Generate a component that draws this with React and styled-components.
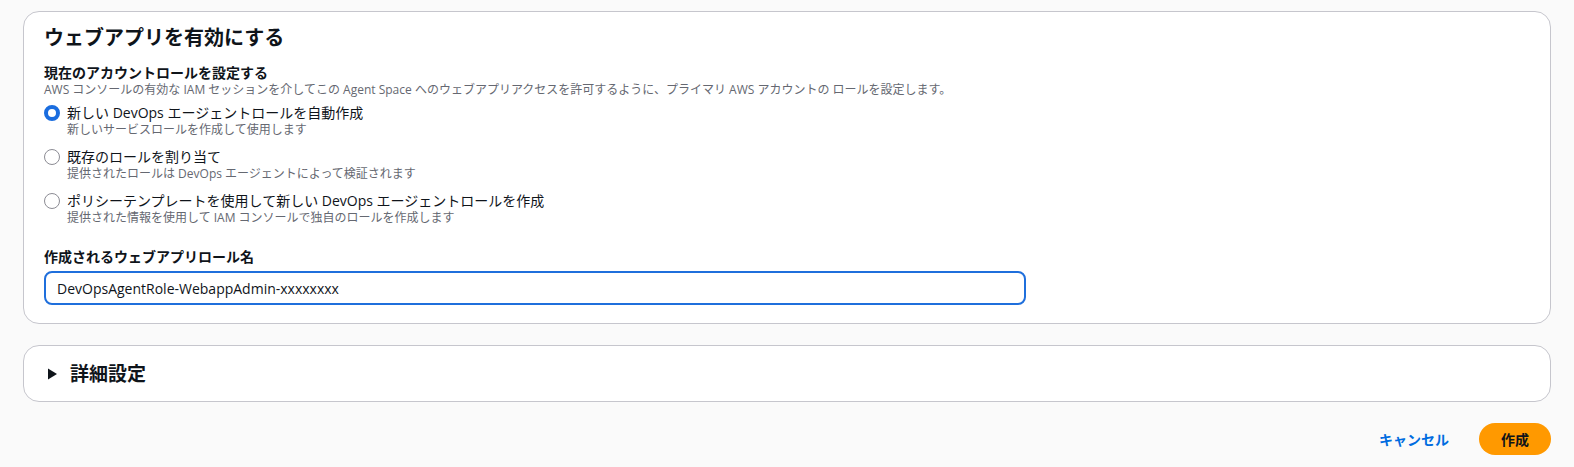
import React, { useState } from 'react';
import styled, { createGlobalStyle } from 'styled-components';

const GlobalStyle = createGlobalStyle`
  html, body {
    margin: 0;
    padding: 0;
    background: #fafafa;
    font-family: "Open Sans", "Noto Sans CJK JP", sans-serif;
    color: #0f141a;
  }
  * { box-sizing: border-box; }
`;

const Page = styled.div`
  padding: 11px 23px 12px 23px;
  display: flex;
  flex-direction: column;
  gap: 21px;
`;

const Card = styled.section`
  background: #ffffff;
  border: 1px solid #c6c6cd;
  border-radius: 16px;
  padding: 14px 20px 18px 20px;
`;

const Title = styled.h2`
  margin: 0;
  font-size: 20px;
  line-height: 24px;
  font-weight: 700;
`;

const FieldGroup = styled.div`
  margin-top: ${p => p.$top || 0}px;
  display: flex;
  flex-direction: column;
`;

const Label = styled.div`
  font-size: 14px;
  line-height: 18px;
  font-weight: 700;
`;

const Hint = styled.div`
  font-size: 12px;
  line-height: 16px;
  color: #656871;
`;

const RadioList = styled.div`
  margin-top: 6px;
  display: flex;
  flex-direction: column;
  gap: 10px;
`;

const RadioRow = styled.label`
  display: grid;
  grid-template-columns: 16px 1fr;
  column-gap: 7px;
  cursor: pointer;
`;

const RadioDot = styled.span`
  width: 16px;
  height: 16px;
  margin-top: 1px;
  border-radius: 50%;
  border: ${p => (p.$checked ? '4.5px solid #1a6ddf' : '1.5px solid #8c8c94')};
  background: #fff;
`;

const RadioText = styled.div`
  display: flex;
  flex-direction: column;
`;

const RadioLabel = styled.span`
  font-size: 14px;
  line-height: 18px;
`;

const TextInput = styled.input`
  margin-top: 5px;
  width: 982px;
  height: 34px;
  border: 2px solid #1f6fdc;
  border-radius: 8px;
  padding: 0 11px;
  font-family: inherit;
  font-size: 14px;
  color: #0f141a;
  caret-color: #000;
  outline: none;
`;

const Expander = styled.button`
  display: flex;
  align-items: center;
  gap: 12px;
  height: 57px;
  padding: 0 22px;
  background: #fff;
  border: 1px solid #c6c6cd;
  border-radius: 16px;
  font-family: inherit;
  text-align: left;
  cursor: pointer;
  color: #0f141a;
`;

const ExpanderTitle = styled.span`
  font-size: 19px;
  line-height: 24px;
  font-weight: 700;
`;

const Footer = styled.div`
  display: flex;
  justify-content: flex-end;
  align-items: center;
  gap: 10px;
`;

const Button = styled.button`
  height: 32px;
  padding: 0 ${p => (p.$primary ? 22 : 20)}px;
  border-radius: 20px;
  border: none;
  background: ${p => (p.$primary ? '#ff9900' : 'transparent')};
  color: ${p => (p.$primary ? '#0f141a' : '#006ce0')};
  font-family: inherit;
  font-size: 14px;
  font-weight: 700;
  cursor: pointer;
`;

const options = [
  {
    id: 'auto',
    label: '新しい DevOps エージェントロールを自動作成',
    hint: '新しいサービスロールを作成して使用します',
  },
  {
    id: 'existing',
    label: '既存のロールを割り当て',
    hint: '提供されたロールは DevOps エージェントによって検証されます',
  },
  {
    id: 'template',
    label: 'ポリシーテンプレートを使用して新しい DevOps エージェントロールを作成',
    hint: '提供された情報を使用して IAM コンソールで独自のロールを作成します',
  },
];

const Caret = () => (
  <svg width="12" height="14" viewBox="0 0 12 14">
    <path d="M2 1.5 L11 7 L2 12.5 Z" fill="#0f141a" />
  </svg>
);

export default function App() {
  const [choice, setChoice] = useState('auto');
  return (
    <>
      <GlobalStyle />
      <Page>
        <Card>
          <Title>ウェブアプリを有効にする</Title>
          <FieldGroup $top={14}>
            <Label>現在のアカウントロールを設定する</Label>
            <Hint>
              AWS コンソールの有効な IAM セッションを介してこの Agent Space へのウェブアプリアクセスを許可するように、プライマリ AWS アカウントの ロールを設定します。
            </Hint>
            <RadioList>
              {options.map(o => (
                <RadioRow key={o.id} onClick={() => setChoice(o.id)}>
                  <RadioDot $checked={choice === o.id} />
                  <RadioText>
                    <RadioLabel>{o.label}</RadioLabel>
                    <Hint>{o.hint}</Hint>
                  </RadioText>
                </RadioRow>
              ))}
            </RadioList>
          </FieldGroup>
          <FieldGroup $top={22}>
            <Label>作成されるウェブアプリロール名</Label>
            <TextInput defaultValue="DevOpsAgentRole-WebappAdmin-xxxxxxxx" autoFocus />
          </FieldGroup>
        </Card>
        <Expander>
          <Caret />
          <ExpanderTitle>詳細設定</ExpanderTitle>
        </Expander>
        <Footer>
          <Button>キャンセル</Button>
          <Button $primary>作成</Button>
        </Footer>
      </Page>
    </>
  );
}
